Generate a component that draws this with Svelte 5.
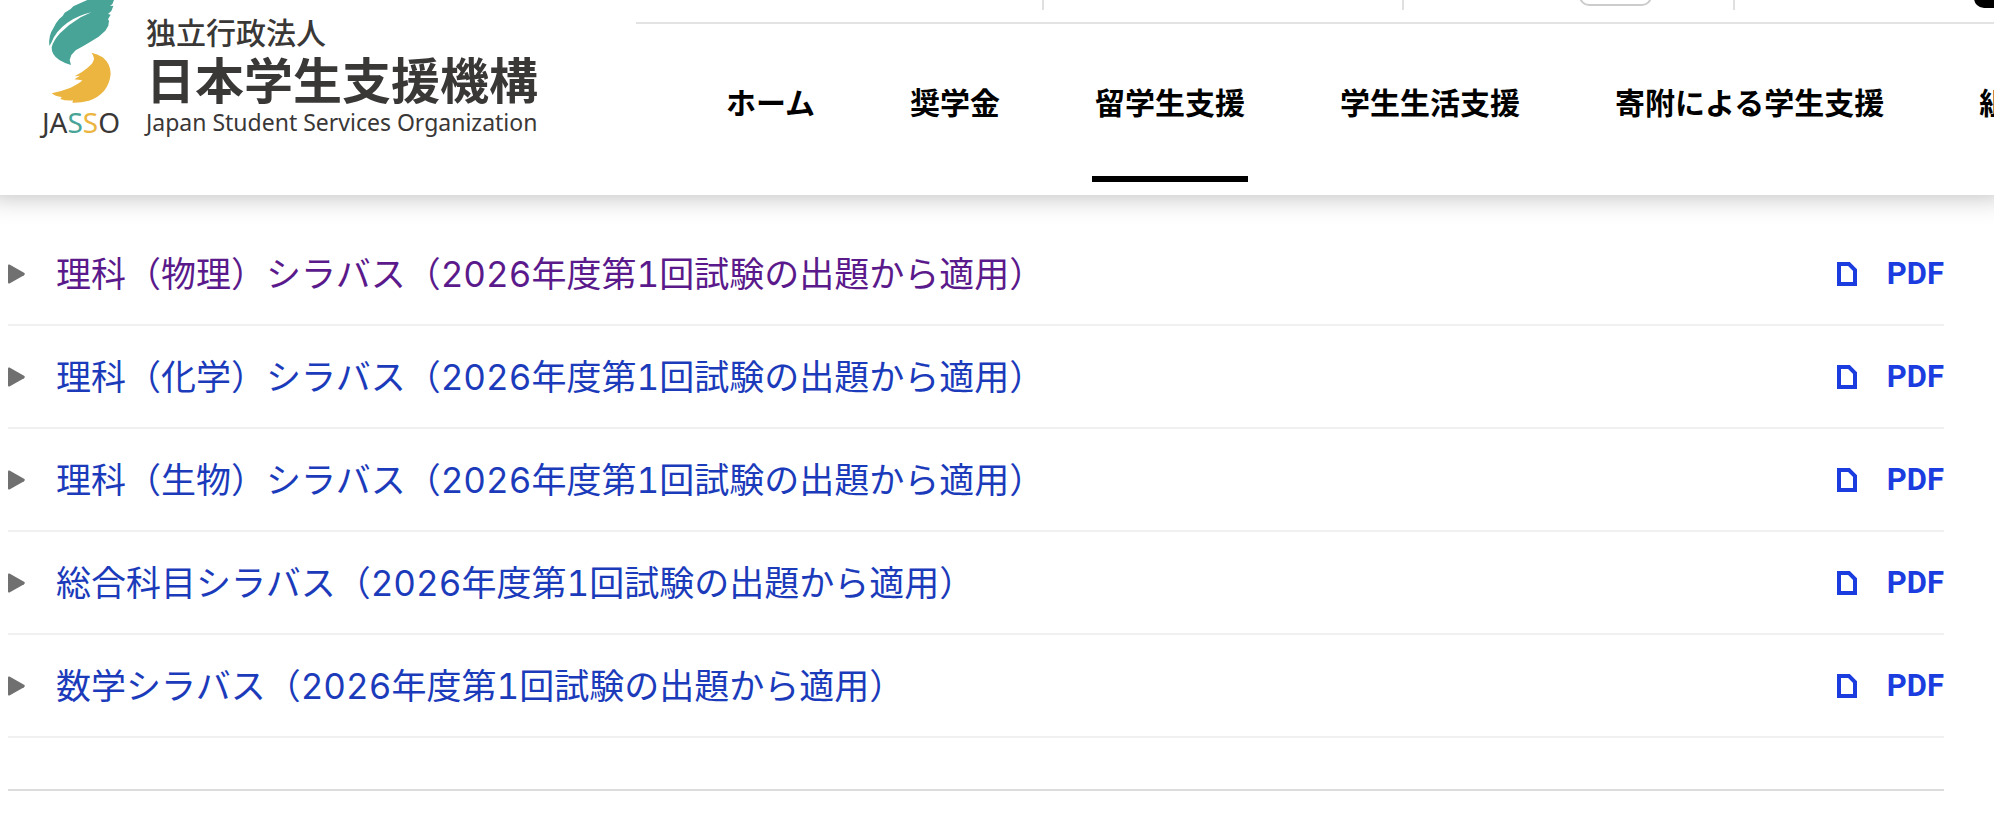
<script>
  const nav = [
    { label: 'ホーム' },
    { label: '奨学金' },
    { label: '留学生支援', current: true },
    { label: '学生生活支援' },
    { label: '寄附による学生支援' },
    { label: '組' }
  ];
  const docs = [
    { title: '理科（物理）シラバス（2026年度第1回試験の出題から適用）', visited: true },
    { title: '理科（化学）シラバス（2026年度第1回試験の出題から適用）' },
    { title: '理科（生物）シラバス（2026年度第1回試験の出題から適用）' },
    { title: '総合科目シラバス（2026年度第1回試験の出題から適用）' },
    { title: '数学シラバス（2026年度第1回試験の出題から適用）' }
  ];
</script>

<header>
  <a class="logo" href="#top">
    <span class="mark">
      <svg viewBox="54 0 198 312" width="66" height="104" aria-hidden="true">
        <path fill="#48a497" d="M172 0 L252 0 L247 13 L240 17 L250 18 L244 33 L234 42 L242 44 L234 58 L237 62 L235 77 L226 92 L206 110 L184 124 L160 138 L137 151 L124 165 L119 180 L123 195 Q104 190 88 180 Q64 165 65 142 Q70 122 90 100 Q118 72 152 52 L184 37 Q145 46 112 68 Q76 94 64 128 L58 138 Q54 108 72 81 L78 70 Q84 58 98 48 L104 38 L122 27 L130 19 L150 10 Z" />
        <path fill="#ebb53f" d="M184 158 Q202 161 218 172 Q242 192 242 222 Q239 252 222 273 Q203 294 177 302 Q150 309 127 308 L129 301 Q108 303 91 297 L95 291 Q75 289 65 280 Q96 273 122 263 Q145 253 157 241 L133 238 L150 227 L134 229 Q157 217 172 204 Q193 188 192 175 Q191 165 184 158 Z" />
      </svg>
      <span class="abbr">JA<span class="green">S</span><span class="gold">S</span>O</span>
    </span>
    <span class="names">
      <span class="kind">独立行政法人</span>
      <span class="name">日本学生支援機構</span>
      <span class="english">Japan Student Services Organization</span>
    </span>
  </a>
  <div class="menus">
    <div class="tools">
      <span class="cell"></span>
      <span class="cell"></span>
      <span class="cell size"><button class="pill" aria-label="文字サイズ"></button></span>
      <span class="cell last"><button class="pill dark" aria-label="検索"></button></span>
    </div>
    <nav>
      {#each nav as item}
        <a href="#top" class:current={item.current}>{item.label}</a>
      {/each}
    </nav>
  </div>
</header>

<main>
  <ul>
    {#each docs as doc}
      <li>
        <svg class="arrow" viewBox="0 0 17 20" width="17" height="20" aria-hidden="true">
          <path fill="#707070" d="M0 1.5 Q0 0 1.5 .6 L16 8.8 Q17.6 10 16 11.2 L1.5 19.4 Q0 20 0 18.5 Z" />
        </svg>
        <a class="title" class:visited={doc.visited} href="#top">{doc.title}</a>
        <a class="pdf" href="#top">
          <svg viewBox="0 0 20 24" width="20" height="24" aria-hidden="true">
            <path fill="none" stroke="#1b3de0" stroke-width="4" d="M2 2 H12 L18 8 V22 H2 Z" />
          </svg>
          <span>PDF</span>
        </a>
      </li>
    {/each}
  </ul>
  <hr />
</main>

<style>
  :global(body) {
    background: #fff;
    overflow-x: hidden;
  }
  header, main {
    font-family: "Noto Sans CJK JP", sans-serif;
  }
  a {
    text-decoration: none;
  }
  header {
    display: flex;
    height: 195px;
    background: #fff;
    box-shadow: 0 -10px 24px 12px rgba(0, 0, 0, 0.25);
  }
  .logo {
    display: flex;
    flex: none;
    gap: 24px;
    width: 596px;
    padding-left: 40px;
    color: #3a3737;
  }
  .mark {
    display: flex;
    flex-direction: column;
    align-items: center;
    width: 82px;
  }
  .abbr {
    font: 28px/36px "Noto Sans", sans-serif;
  }
  .green { color: #48a497; }
  .gold { color: #ebb53f; }
  .names {
    display: flex;
    flex-direction: column;
    padding-top: 14px;
    white-space: nowrap;
  }
  .kind {
    font-size: 30px;
    font-weight: 500;
    line-height: 34px;
  }
  .name {
    font-size: 49px;
    font-weight: 700;
    line-height: 60px;
  }
  .english {
    font: 23px/28px "Noto Sans", sans-serif;
  }
  .menus {
    flex: 1;
    min-width: 0;
  }
  .tools {
    display: grid;
    grid-template-columns: 408fr 360fr 331fr 259fr;
    height: 22px;
    border-bottom: 2px solid #e3e3e3;
  }
  .cell {
    box-sizing: border-box;
    display: flex;
    justify-content: flex-end;
    min-width: 0;
    height: 10px;
    border-right: 2px solid #e0e0e0;
  }
  .size {
    padding-right: 81px;
  }
  .last {
    border: 0;
  }
  .pill {
    box-sizing: border-box;
    width: 73px;
    height: 36px;
    margin-top: -30px;
    padding: 0;
    border: 2px solid #ccc;
    border-radius: 10px;
    background: #fff;
  }
  .dark {
    width: 20px;
    height: 38px;
    border: 0;
    border-radius: 0 0 0 10px;
    background: #000;
  }
  nav {
    display: flex;
    gap: 95px;
    padding-left: 90px;
    overflow: hidden;
  }
  nav a {
    position: relative;
    flex: none;
    color: #000;
    font-size: 30px;
    font-weight: 700;
    line-height: 40px;
    padding: 57px 0 61px;
  }
  .current::after {
    content: "";
    position: absolute;
    left: -3px;
    right: -3px;
    bottom: 0;
    height: 6px;
    background: #000;
  }
  main {
    padding: 28px 50px 42px 8px;
  }
  ul {
    margin: 0;
    padding: 0;
    list-style: none;
  }
  li {
    display: flex;
    align-items: center;
    height: 101px;
    border-bottom: 2px solid #f0f0f0;
  }
  .arrow {
    flex: none;
    margin-right: 31px;
  }
  .title {
    flex: 1;
    color: #1b3bbb;
    font-family: Inter, "Noto Sans CJK JP", sans-serif;
    font-size: 35px;
    font-weight: 400;
    font-variant-numeric: tabular-nums;
    line-height: 48px;
  }
  .visited { color: #5b1a8b; }
  .pdf {
    display: flex;
    align-items: center;
    gap: 30px;
    color: #1b3de0;
    font: 700 31px/40px Roboto, sans-serif;
  }
  hr {
    height: 2px;
    margin: 51px 0 0;
    border: 0;
    background: #dcdcdc;
  }
</style>
